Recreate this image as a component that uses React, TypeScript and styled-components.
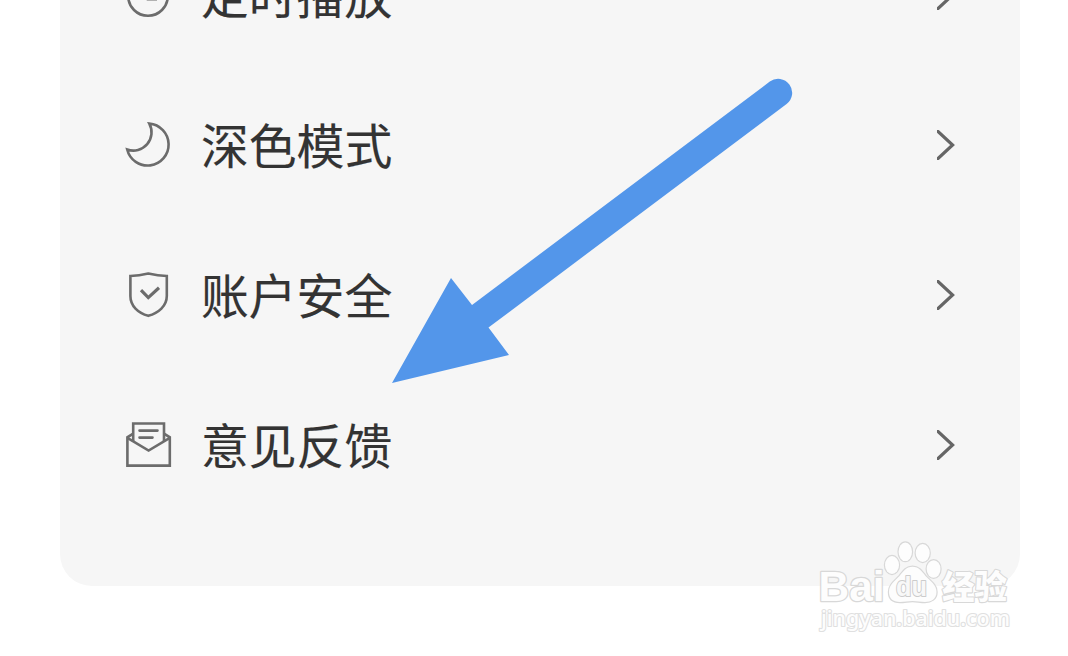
import type { ReactNode } from "react";
import styled, { createGlobalStyle } from "styled-components";

const GlobalStyle = createGlobalStyle`
    * {
        box-sizing: border-box;
    }
    body {
        margin: 0;
        background-color: #ffffff;
        font-family: "Noto Sans CJK SC", sans-serif;
    }
`;

const Screen = styled.main`
    position: relative;
    width: 1068px;
    height: 656px;
    padding: 0 48px 0 60px;
    overflow: hidden;
`;

const Panel = styled.ul`
    display: flex;
    flex-direction: column;
    justify-content: flex-end;
    height: 586px;
    margin: 0;
    padding: 0 65px 66px 64px;
    overflow: hidden;
    list-style: none;
    background-color: #f6f6f6;
    border-radius: 0 0 32px 32px;
`;

const Item = styled.li`
    display: flex;
    flex-shrink: 0;
    align-items: center;
    height: 150px;
`;

const Icon = styled.svg`
    width: 48px;
    height: 48px;
    fill: none;
    stroke: #6c6c6c;
    stroke-width: 2.6;
`;

const Label = styled.span`
    flex: 1;
    margin-left: 29px;
    padding-bottom: 2px;
    font-size: 47.8px;
    line-height: 72px;
    color: #333333;
    -webkit-text-stroke: 0.15px #333333;
`;

const Chevron = styled.svg`
    width: 18px;
    height: 30px;
    fill: none;
    stroke: #666666;
    stroke-width: 3.2;
`;

const Arrow = styled.svg`
    position: absolute;
    top: 70px;
    left: 380px;
    width: 420px;
    height: 320px;
    fill: #5396ea;
`;

const Watermark = styled.svg`
    position: absolute;
    top: 535px;
    left: 810px;
    width: 210px;
    height: 105px;
    fill: #fdfdfd;
    stroke: #d8d8d8;
    stroke-width: 2.4;
    stroke-linejoin: round;
    paint-order: stroke;
`;

const Brand = styled.text`
    font-family: "Liberation Sans", sans-serif;
    font-size: 43px;
    font-weight: 700;
    stroke-width: 2.6;
`;

const BrandInner = styled.text`
    font-family: "Liberation Sans", sans-serif;
    font-size: 27px;
    font-weight: 700;
    fill: #f8f8f8;
    stroke: #cccccc;
    stroke-width: 2;
`;

const BrandName = styled.text`
    font-family: "Noto Sans CJK SC", sans-serif;
    font-size: 33px;
    font-weight: 900;
    stroke-width: 2.2;
`;

const Site = styled.text`
    font-family: "Noto Sans", sans-serif;
    font-size: 21.5px;
    font-weight: 500;
    stroke-width: 2.2;
    stroke: #e0e0e0;
`;

interface IMenuItem {
    label: string,
    icon: ReactNode,
}

const items: IMenuItem[] = [
    {
        label: "定时播放",
        icon: (
            <>
                <circle cx="24" cy="25" r="19.8" />
                <path d="M24 14v14.2h9" />
            </>
        ),
    },
    {
        label: "深色模式",
        icon: <path d="M25.3 2.6A21 21 0 1 1 3.2 28.5A18.2 18.2 0 0 0 25.3 2.6Z" />,
    },
    {
        label: "账户安全",
        icon: (
            <>
                <path d="M24.3 2.6Q34 4.8 42.8 5V25C42.8 35 34.5 42 24.3 44.8C14 42 6.4 35 6.4 25V5Q15 4.8 24.3 2.6Z" />
                <path d="M17 19.2L24.3 26.6L35 16.8" strokeWidth="3.2" />
            </>
        ),
    },
    {
        label: "意见反馈",
        icon: (
            <>
                <path d="M9.2 12.6L3.4 16.3V44.6H45.8V16.3L40 12.6" />
                <path d="M3.4 16.8L24.6 29.5L45.8 16.8" />
                <path d="M9.2 20.5V2.5H40V20.5" />
                <path d="M15.5 9.6H33.5M15.5 16.6H28.5" strokeLinecap="round" />
            </>
        ),
    },
];

function App() {
    return (
        <Screen>
            <GlobalStyle />
            <Panel>
                {items.map((item) => (
                    <Item key={item.label}>
                        <Icon viewBox="0 0 48 48">{item.icon}</Icon>
                        <Label>{item.label}</Label>
                        <Chevron viewBox="0 0 18 30">
                            <path d="M-1 -.4L15.6 15L-1 30.4" />
                        </Chevron>
                    </Item>
                ))}
            </Panel>
            <Arrow viewBox="380 70 420 320">
                <path d="M392 383L451 278L472 305L769.8 81.6A14 14 0 0 1 786.6 104L488.5 327.5L509 355Z" />
            </Arrow>
            <Watermark viewBox="810 535 210 105">
                <Brand x="818.5" y="600.5" textLength="66" lengthAdjust="spacingAndGlyphs">Bai</Brand>
                <ellipse cx="892" cy="565" rx="7" ry="9" />
                <ellipse cx="905.3" cy="551.8" rx="6.7" ry="9.3" />
                <ellipse cx="922.7" cy="553" rx="7" ry="9" />
                <ellipse cx="933.6" cy="569" rx="6.9" ry="8.7" />
                <path d="M912.5 566.7C919 566.7 922 571.5 925.5 576C930 581 936.5 584.5 936.5 592C936.5 599 931 602 925 602C920 602 917 601 912.5 601C908 601 905 602 900 602C893 602 889 598.5 889 592C889 584.5 895 581 899.5 576C903 571.5 906 566.7 912.5 566.7Z" />
                <BrandInner x="896" y="596" textLength="31" lengthAdjust="spacingAndGlyphs">du</BrandInner>
                <BrandName x="942" y="598.5" textLength="65" lengthAdjust="spacingAndGlyphs">经验</BrandName>
                <Site x="821" y="626" textLength="189" lengthAdjust="spacingAndGlyphs">jingyan.baidu.com</Site>
            </Watermark>
        </Screen>
    );
}

export default App;
